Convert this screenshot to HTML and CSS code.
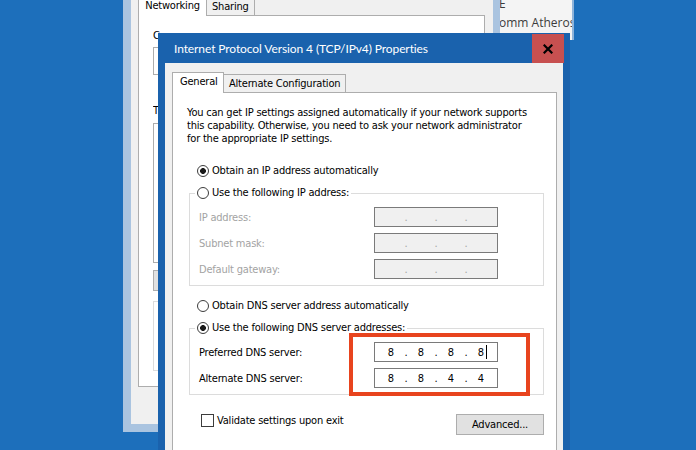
FILE: index.html
```html
<!DOCTYPE html>
<html>
<head>
<meta charset="utf-8">
<title>Internet Protocol Version 4 (TCP/IPv4) Properties</title>
<link rel="stylesheet" href="styles.css">
</head>
<body>
<div class="desktop">
  <div class="conn-window">
    <div class="conn-line">E</div>
    <div class="conn-line">omm Atheros</div>
  </div>

  <div class="back-window">
    <div class="bw-tabs">
      <div class="bw-tab bw-tab-sel">Networking</div>
      <div class="bw-tab">Sharing</div>
    </div>
    <div class="bw-panel">
      <div class="bw-label">Connect using:</div>
      <div class="bw-box"></div>
      <div class="bw-label bw-label-2">This connection uses the following items:</div>
      <div class="bw-list"></div>
      <div class="bw-btn"></div>
      <div class="bw-desc"></div>
    </div>
  </div>

  <div class="dialog">
    <div class="titlebar">
      <span class="title">Internet Protocol Version 4 (TCP/IPv4) Properties</span>
      <div class="close">
        <svg width="10" height="10" viewBox="0 0 10 10"><path d="M1.5 1.5L8.5 8.5M8.5 1.5L1.5 8.5" stroke="#000" stroke-width="2.2" stroke-linecap="square"/></svg>
      </div>
    </div>
    <div class="body">
      <div class="tabs">
        <div class="tab tab-sel">General</div>
        <div class="tab">Alternate Configuration</div>
      </div>
      <div class="panel">
        <p class="intro">You can get IP settings assigned automatically if your network supports<br>this capability. Otherwise, you need to ask your network administrator<br>for the appropriate IP settings.</p>

        <div class="radio-row"><span class="radio radio-on"></span>Obtain an IP address automatically</div>
        <fieldset class="group">
          <legend class="legend"><span class="radio"></span>Use the following IP address:</legend>
          <div class="rows">
            <span class="lbl lbl-off">IP address:</span>
            <span class="ipbox ipbox-off"><span class="oct"></span><span class="dot">.</span><span class="oct"></span><span class="dot">.</span><span class="oct"></span><span class="dot">.</span><span class="oct"></span></span>
            <span class="lbl lbl-off">Subnet mask:</span>
            <span class="ipbox ipbox-off"><span class="oct"></span><span class="dot">.</span><span class="oct"></span><span class="dot">.</span><span class="oct"></span><span class="dot">.</span><span class="oct"></span></span>
            <span class="lbl lbl-off">Default gateway:</span>
            <span class="ipbox ipbox-off"><span class="oct"></span><span class="dot">.</span><span class="oct"></span><span class="dot">.</span><span class="oct"></span><span class="dot">.</span><span class="oct"></span></span>
          </div>
        </fieldset>

        <div class="radio-row radio-row-dns"><span class="radio"></span>Obtain DNS server address automatically</div>
        <fieldset class="group">
          <legend class="legend"><span class="radio radio-on"></span>Use the following DNS server addresses:</legend>
          <div class="rows">
            <span class="lbl">Preferred DNS server:</span>
            <span class="ipbox"><span class="oct">8</span><span class="dot">.</span><span class="oct">8</span><span class="dot">.</span><span class="oct">8</span><span class="dot">.</span><span class="oct oct-caret">8<span class="caret"></span></span></span>
            <span class="lbl">Alternate DNS server:</span>
            <span class="ipbox"><span class="oct">8</span><span class="dot">.</span><span class="oct">8</span><span class="dot">.</span><span class="oct">4</span><span class="dot">.</span><span class="oct">4</span></span>
          </div>
        </fieldset>

        <div class="bottom-row">
          <label class="check-label"><span class="checkbox"></span>Validate settings upon exit</label>
          <div class="button">Advanced...</div>
        </div>
      </div>
    </div>
    <div class="highlight"></div>
  </div>
</div>
</body>
</html>
```

FILE: styles.css
```css
* { box-sizing: border-box; }

html, body {
  margin: 0;
  padding: 0;
}

body {
  width: 696px;
  height: 450px;
  overflow: hidden;
  background: #1d6fbb;
  font-family: "DejaVu Sans Condensed", "DejaVu Sans", sans-serif;
  font-size: 11px;
  letter-spacing: -0.2px;
  color: #000;
}

.desktop {
  position: relative;
  width: 696px;
  height: 450px;
  overflow: hidden;
  background: #1d6fbb;
}

/* window further behind (network connections list) */
.conn-window {
  position: absolute;
  left: 470px;
  top: 0;
  width: 104px;
  height: 40px;
  background: #f4f4f4;
  border-right: 2px solid #8fb4da;
  padding: 0 0 0 29px;
  font-family: "Open Sans", "Noto Sans", sans-serif;
  font-size: 12px;
  letter-spacing: 0;
  color: #3c3c3c;
  line-height: 19px;
  white-space: nowrap;
  overflow: hidden;
}

.conn-line:first-child { margin-top: -6px; }

/* back window: Ethernet properties */
.back-window {
  position: absolute;
  left: 123px;
  top: 0;
  width: 377px;
  height: 432px;
  background: #f0f0f0;
  border: 8px solid #aac4e0;
  border-top: 0;
  border-right-width: 7px;
  padding: 0 8px 0 7px;
  display: flex;
  flex-direction: column;
}

.bw-tabs {
  display: flex;
  align-items: flex-end;
  height: 16px;
  margin-bottom: -1px;
  position: relative;
  z-index: 1;
}

.bw-tab {
  height: 21px;
  border: 1px solid #adadad;
  border-left: 0;
  border-bottom: 0;
  background: #f0f0f0;
  padding: 0 5px 2px;
  line-height: 13px;
  display: flex;
  align-items: flex-end;
  margin-bottom: 1px;
}

.bw-tab-sel {
  height: 24px;
  width: 69px;
  justify-content: center;
  border-left: 1px solid #adadad;
  background: #fff;
  padding-bottom: 4px;
  margin-bottom: 0;
}

.bw-panel {
  flex: 1;
  background: #fff;
  border: 1px solid #adadad;
  margin-bottom: 37px;
  padding: 13px 14px 0;
  display: flex;
  flex-direction: column;
}

.bw-label {
  line-height: 13px;
  width: 7px;
  overflow: hidden;
  white-space: nowrap;
}
.bw-label-2 { margin-top: 29px; }

.bw-box {
  height: 28px;
  margin-top: 5px;
  border: 1px solid #adadad;
  width: 320px;
}

.bw-list {
  height: 140px;
  margin-top: 6px;
  border: 1px solid #adadad;
  width: 320px;
}

.bw-btn {
  height: 21px;
  width: 80px;
  margin-top: 7px;
  border: 1px solid #adadad;
  background: #e1e1e1;
}

.bw-desc {
  height: 70px;
  margin-top: 10px;
  border: 1px solid #dcdcdc;
  width: 320px;
}

/* dialog */
.dialog {
  position: absolute;
  left: 158px;
  top: 33px;
  width: 412px;
  height: 430px;
  background: #1a62ad;
  display: flex;
  flex-direction: column;
}

.titlebar {
  height: 30px;
  display: flex;
  align-items: center;
  justify-content: space-between;
  padding-left: 16px;
}

.title {
  font-family: "Lato", "Open Sans", sans-serif;
  font-size: 12px;
  letter-spacing: -0.1px;
  color: #fff;
}

.close {
  align-self: flex-start;
  margin-top: 1px;
  margin-right: 6px;
  width: 32px;
  height: 29px;
  background: #c75050;
  display: flex;
  align-items: center;
  justify-content: center;
}

.body {
  flex: 1;
  margin: 0 7px;
  background: #f0f0f0;
  padding: 9px 6px 0 7px;
  display: flex;
  flex-direction: column;
}

.tabs {
  display: flex;
  align-items: flex-end;
  height: 21px;
  margin-bottom: -1px;
  position: relative;
  z-index: 1;
}

.tab {
  height: 18px;
  border: 1px solid #adadad;
  border-left: 0;
  border-bottom: 0;
  background: #f0f0f0;
  padding: 2px 5px 0;
  line-height: 13px;
  margin-bottom: 1px;
}

.tab-sel {
  height: 21px;
  width: 52px;
  border-left: 1px solid #adadad;
  background: #fff;
  padding: 2px 0 0 7px;
  margin-bottom: 0;
}

.panel {
  flex: 1;
  background: #fff;
  border: 1px solid #adadad;
  padding: 13px 12px 0 14px;
  display: flex;
  flex-direction: column;
}

.intro {
  margin: 0;
  line-height: 13px;
}

.radio-row {
  margin-top: 19px;
  margin-left: 10px;
  height: 14px;
  line-height: 14px;
  display: flex;
  align-items: center;
}

.radio-row-dns { margin-top: 13px; }

.radio {
  display: inline-block;
  width: 12px;
  height: 12px;
  border: 1px solid #3c3c3c;
  border-radius: 50%;
  background: #fff;
  margin-right: 3px;
  flex: none;
}

.radio-on {
  background: radial-gradient(circle, #1a1a1a 0 2.6px, #fff 3.2px);
}

.group {
  margin: 8px 0 0 2px;
  padding: 7px 9px 6px 9px;
  border: 1px solid #dcdcdc;
  min-width: 0;
}

.legend {
  margin-left: -4px;
  padding: 0 2px;
  height: 14px;
  line-height: 14px;
  display: flex;
  align-items: center;
}

.rows {
  display: grid;
  grid-template-columns: 175px 124px;
  grid-auto-rows: 20px;
  row-gap: 6px;
  align-items: center;
}

.lbl { line-height: 13px; }
.lbl-off { color: #a3a3a3; }

.ipbox {
  height: 20px;
  border: 1px solid #7a7a7a;
  background: #fff;
  display: flex;
  align-items: center;
  padding-left: 3px;
  line-height: 13px;
  letter-spacing: 0;
}

.ipbox-off {
  background: #f0f0f0;
  color: #a3a3a3;
}

.oct {
  width: 26px;
  text-align: center;
  position: relative;
}

.dot {
  width: 4px;
  text-align: center;
}

.caret {
  position: absolute;
  top: -1px;
  left: 18px;
  width: 1px;
  height: 14px;
  background: #000;
}

.bottom-row {
  margin-top: 19px;
  display: flex;
  justify-content: space-between;
  align-items: flex-start;
}

.check-label {
  display: flex;
  align-items: center;
  margin-left: 14px;
  line-height: 13px;
}

.checkbox {
  width: 13px;
  height: 13px;
  border: 1px solid #3c3c3c;
  background: #fff;
  margin-right: 3px;
}

.button {
  width: 88px;
  height: 21px;
  border: 1px solid #adadad;
  background: #e1e1e1;
  text-align: center;
  line-height: 19px;
}

.highlight {
  position: absolute;
  left: 191px;
  top: 300px;
  width: 181px;
  height: 63px;
  border: 4px solid #e8441e;
}
```
